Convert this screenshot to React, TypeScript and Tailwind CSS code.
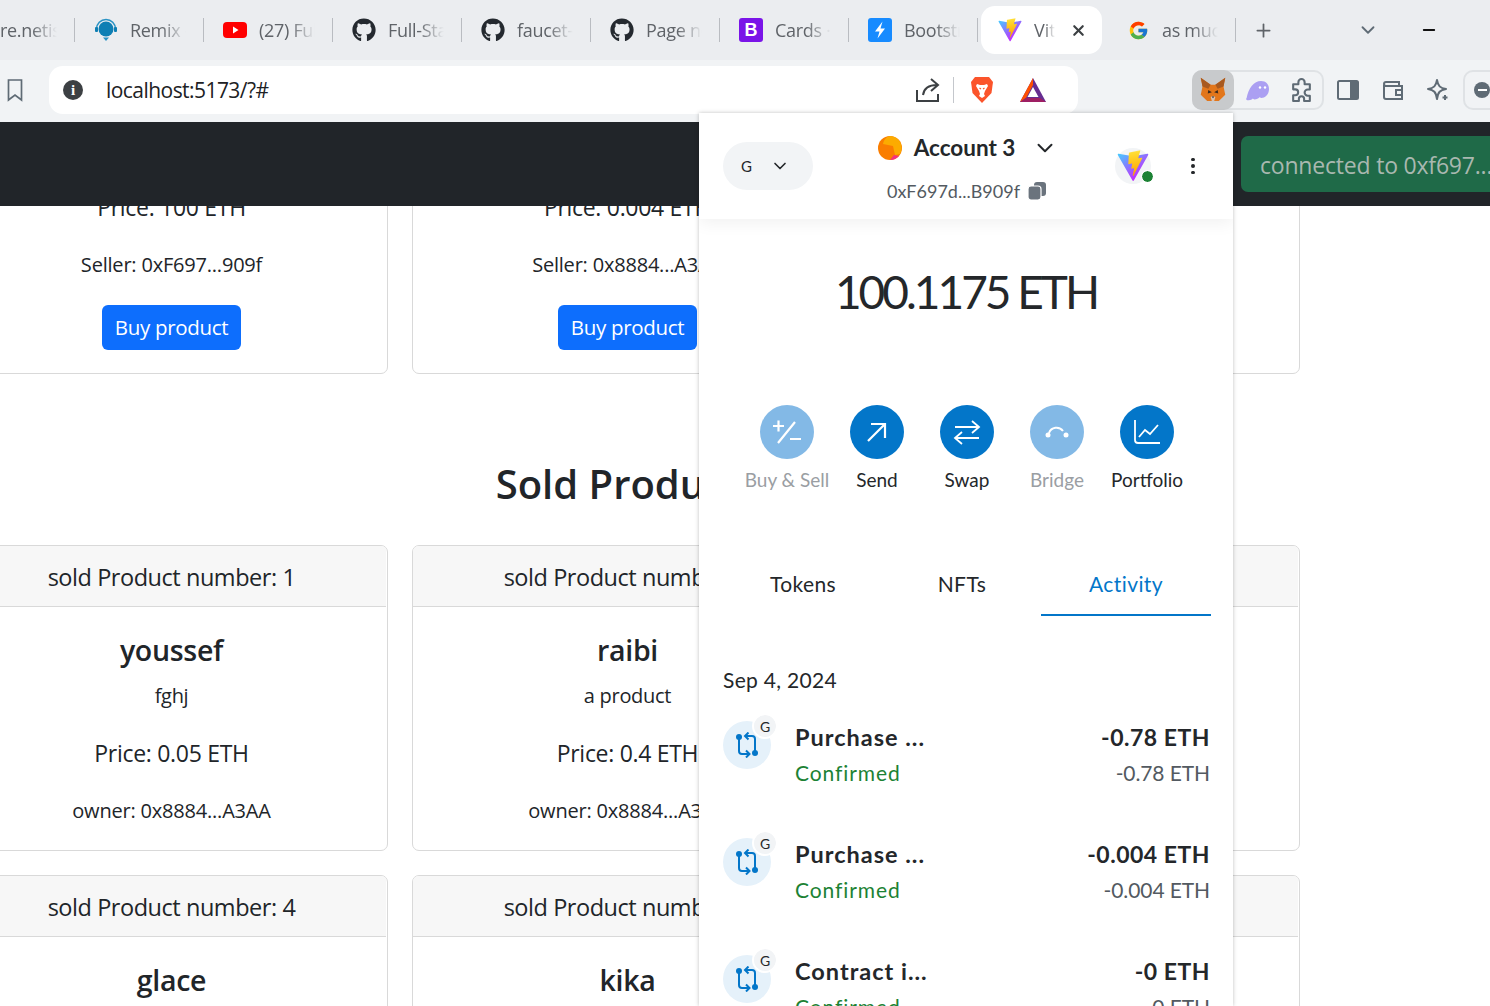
import { FaGithub } from "react-icons/fa";
import { FcGoogle } from "react-icons/fc";
import { ChevronDown, Minus, Plus, X } from "lucide-react";

const pageFont = "font-['Open_Sans',sans-serif]";
const mmFont = "font-['Lato',sans-serif]";

function ViteLogo({ id, className }: { id: string; className: string }) {
  return (
    <svg viewBox="0 0 410 404" className={className}>
      <defs>
        <linearGradient id={`${id}a`} x1="6" y1="33" x2="235" y2="344" gradientUnits="userSpaceOnUse">
          <stop stopColor="#41D1FF" />
          <stop offset="1" stopColor="#BD34FE" />
        </linearGradient>
        <linearGradient id={`${id}b`} x1="194" y1="8" x2="236" y2="292" gradientUnits="userSpaceOnUse">
          <stop stopColor="#FFEA83" />
          <stop offset="0.08" stopColor="#FFDD35" />
          <stop offset="1" stopColor="#FFA800" />
        </linearGradient>
      </defs>
      <path
        d="M399.641 59.5246L215.643 388.545C211.844 395.338 202.084 395.378 198.228 388.618L10.5817 59.5563C6.38087 52.1896 12.6802 43.2665 21.0281 44.7586L205.223 77.6824C206.398 77.8924 207.601 77.8904 208.776 77.6763L389.119 44.8058C397.439 43.2894 403.768 52.1434 399.641 59.5246Z"
        fill={`url(#${id}a)`}
      />
      <path
        d="M292.965 1.5744L156.801 28.2552C154.563 28.6937 152.906 30.5903 152.771 32.8664L144.395 174.33C144.198 177.662 147.258 180.248 150.51 179.498L188.42 170.749C191.967 169.931 195.172 173.055 194.443 176.622L183.18 231.775C182.422 235.487 185.907 238.661 189.532 237.56L212.947 230.446C216.577 229.344 220.065 232.527 219.297 236.242L201.398 322.875C200.278 328.294 207.486 331.249 210.492 326.603L212.5 323.5L323.454 102.072C325.312 98.3645 322.108 94.137 318.036 94.9228L279.014 102.454C275.347 103.161 272.227 99.746 273.262 96.1583L298.731 7.86689C299.767 4.27314 296.636 0.855181 292.965 1.5744Z"
        fill={`url(#${id}b)`}
      />
    </svg>
  );
}

function RemixIcon() {
  return (
    <svg viewBox="0 0 24 24" className="h-[24px] w-[24px]">
      <circle cx="12" cy="11" r="7.5" fill="#0e7fb4" />
      <path d="M2.5 11a9.5 9.5 0 0 1 19 0" fill="none" stroke="#2a93c4" strokeWidth="1.6" />
      <rect x="1" y="9" width="3" height="5" rx="1" fill="#0e7fb4" />
      <rect x="20" y="9" width="3" height="5" rx="1" fill="#0e7fb4" />
      <path d="M9 19.5h6l-3 3.5z" fill="#2a93c4" />
    </svg>
  );
}

function YoutubeIcon() {
  return (
    <svg viewBox="0 0 24 24" className="h-[24px] w-[24px]">
      <rect y="4" width="24" height="16" rx="4" fill="#f00" />
      <path d="M10 8.5v7l5.5-3.5z" fill="#fff" />
    </svg>
  );
}

function BootstrapIcon() {
  return (
    <div className="flex h-[24px] w-[24px] items-center justify-center rounded-[3px] bg-[#7a14e8] font-['Liberation_Sans',sans-serif] text-[18px] font-bold leading-none text-white">
      B
    </div>
  );
}

function BoltIcon() {
  return (
    <svg viewBox="0 0 24 24" className="h-[24px] w-[24px]">
      <rect width="24" height="24" rx="3" fill="#178bff" />
      <path d="M14.5 3.5 7 13.5h4.5L9.5 20.5 17 10.5h-4.5z" fill="#fff" />
    </svg>
  );
}

function Tab({ icon, label, width = "w-[129px]" }: { icon?: React.ReactNode; label: string; width?: string }) {
  return (
    <div className={`flex h-[48px] shrink-0 items-center ${width}`}>
      {icon && <div className="ml-[19px] flex w-[24px] justify-center">{icon}</div>}
      <div
        className={`${icon ? "ml-[12px] w-[56px]" : "w-[57px]"} overflow-hidden whitespace-nowrap text-[18px] tracking-[-0.3px] text-[#5f6368] [mask-image:linear-gradient(to_right,black_55%,transparent)]`}
      >
        {label}
      </div>
      <div className="ml-auto h-[24px] w-px bg-[#b9bcc1]" />
    </div>
  );
}

function TabBar() {
  return (
    <div className={`flex h-[60px] items-start bg-[#ebedf0] pt-[6px] ${pageFont}`}>
      <Tab label="re.netis" width="w-[75px]" />
      <Tab icon={<RemixIcon />} label="Remix - " />
      <Tab icon={<YoutubeIcon />} label="(27) Full" />
      <Tab icon={<FaGithub size={24} color="#24292f" />} label="Full-Stack" />
      <Tab icon={<FaGithub size={24} color="#24292f" />} label="faucet-" />
      <Tab icon={<FaGithub size={24} color="#24292f" />} label="Page not" />
      <Tab icon={<BootstrapIcon />} label="Cards · " />
      <Tab icon={<BoltIcon />} label="Bootstrap" />
      <div className="ml-[3px] flex h-[48px] w-[121px] shrink-0 items-center rounded-[14px] bg-white pl-[17px]">
        <ViteLogo id="tab" className="h-[24px] w-[24px]" />
        <span className="ml-[12px] w-[21px] overflow-hidden text-[18px] text-[#5f6368] [mask-image:linear-gradient(to_right,black_50%,transparent)]">
          Vite
        </span>
        <X size={17} strokeWidth={3} className="ml-[15px] text-[#3c4043]" />
      </div>
      <div className="ml-[26px] flex h-[48px] items-center">
        <FcGoogle size={21} />
        <span className="ml-[13px] w-[56px] overflow-hidden whitespace-nowrap text-[18px] tracking-[-0.3px] text-[#5f6368] [mask-image:linear-gradient(to_right,black_55%,transparent)]">
          as much
        </span>
        <div className="ml-[17px] h-[24px] w-px bg-[#b9bcc1]" />
        <Plus size={21} strokeWidth={2} className="ml-[17px] text-[#5f6368]" />
        <ChevronDown size={22} strokeWidth={2} className="ml-[83px] text-[#5f6b75]" />
        <Minus size={18} strokeWidth={2.4} className="ml-[41px] text-[#111]" />
      </div>
    </div>
  );
}

function FoxIcon() {
  return (
    <svg viewBox="0 0 24 24" className="h-[28px] w-[28px]">
      <path d="M1.500 1.500 10 7.500h4L22.500 1.500 21 9l1.500 7-5.500 5.500h-10L1.500 16 3 9z" fill="#e2761b" />
      <path d="M1.500 1.500 10 7.500 8 11l-5-2z" fill="#a8591f" />
      <path d="M22.500 1.500 14 7.500 16 11l5-2z" fill="#a8591f" />
      <path d="M8 12l3 2-3.500 1zM16 12l-3 2 3.500 1z" fill="#3b2a1e" />
      <path d="M10 18l2-1 2 1-1 3.500h-2z" fill="#d7c1b3" />
      <path d="M11 17.500h2l-1 1.500z" fill="#1d1a18" />
    </svg>
  );
}

function GhostIcon() {
  return (
    <svg viewBox="0 0 26 24" className="h-[24px] w-[26px]">
      <path
        d="M1.500 20.500C3.500 10 9 3 16 3c5 0 8 3.500 8 8 0 6-4.500 9-7.500 9-1.300 0-1.800-1-1.800-1s-1.700 2.500-5 2.500c-1.200 0-1.700-1-1.700-1s-2 1.800-4.500 1.800c-1.500 0-2.500-.5-2.500-1.800z"
        fill="#ab9ff2"
      />
      <circle cx="15" cy="9.500" r="1.200" fill="#fff" />
      <circle cx="20" cy="9.500" r="1.200" fill="#fff" />
    </svg>
  );
}

function BraveIcon() {
  return (
    <svg viewBox="0 0 24 28" className="h-[28px] w-[24px]">
      <path d="M5 1h14l4 5-1.500 11L12 27 2.500 17 1 6z" fill="#fb542b" />
      <path d="M7 8l3 1h4l3-1 1 2-3 5-1 3 1 2-3 2-3-2 1-2-1-3-3-5z" fill="#fff" />
      <path d="M9.500 12l1.500 1M14.500 12 13 13" stroke="#fb542b" strokeWidth="1.200" />
    </svg>
  );
}

function BatIcon() {
  return (
    <svg viewBox="0 0 28 26" className="h-[26px] w-[28px]">
      <path d="M14 1 1 25h26z" fill="#662d91" />
      <path d="M14 1 1 25l6-4 7-13z" fill="#ff5000" />
      <path d="M1 25h26l-6-4H7z" fill="#9e1f63" />
      <path d="M14 10l-5.500 10h11z" fill="#fff" />
    </svg>
  );
}

function AddressBar() {
  return (
    <div className={`flex h-[62px] items-start overflow-hidden bg-[#f1f3f5] pt-[6px] ${pageFont}`}>
      <svg viewBox="0 0 18 24" className="ml-[6px] mt-[12px] h-[24px] w-[18px] shrink-0" fill="none" stroke="#5f6b75" strokeWidth="1.700">
        <path d="M2.500 2h13v20L9 17l-6.500 5z" />
      </svg>
      <div className="ml-[25px] flex h-[48px] w-[1029px] shrink-0 items-center rounded-[14px] bg-white pr-[31px]">
        <div className="ml-[14px] flex h-[20px] w-[20px] items-center justify-center rounded-full bg-[#3c4043] font-['Liberation_Serif',serif] text-[15px] font-bold text-white">
          i
        </div>
        <span className="ml-[23px] pt-[2px] text-[21px] tracking-[-0.55px] text-[#202124]">localhost:5173/?#</span>
        <svg viewBox="0 0 26 26" className="ml-auto h-[26px] w-[26px]" fill="none" stroke="#3c4043" strokeWidth="2">
          <path d="M2 13v11h21v-7M8 18c1-7 6-10 14-10M16 2l7 6-7 6" />
        </svg>
        <div className="ml-[12px] h-[26px] w-px bg-[#c4c7cc]" />
        <div className="ml-[16px]">
          <BraveIcon />
        </div>
        <div className="ml-[25px]">
          <BatIcon />
        </div>
      </div>
      <div className="ml-[114px] mt-[4px] flex h-[40px] w-[132px] shrink-0 items-center rounded-[10px] border-2 border-[#dfe2e5]">
        <div className="-my-[2px] -ml-[2px] flex h-[40px] w-[42px] items-center justify-center rounded-[10px] bg-[#c8cacc]">
          <FoxIcon />
        </div>
        <div className="ml-[11px]">
          <GhostIcon />
        </div>
        <svg viewBox="0 0 24 24" className="ml-[18px] h-[25px] w-[25px]" fill="none" stroke="#5f6b75" strokeWidth="2" strokeLinejoin="round">
          <path d="M9 4a3 3 0 0 1 6 0v2h5v5h-2a3 3 0 0 0 0 6h2v5h-5.500v-2a2.500 2.500 0 0 0-5 0v2H4v-5.500h2a2.800 2.800 0 0 0 0-5.600H4V6h5z" />
        </svg>
      </div>
      <svg viewBox="0 0 24 24" className="ml-[12px] mt-[12px] h-[24px] w-[24px] shrink-0">
        <rect x="2" y="3" width="20" height="18" rx="1.500" fill="none" stroke="#5f6b75" strokeWidth="2" />
        <rect x="14" y="3" width="8" height="18" fill="#5f6b75" />
      </svg>
      <svg viewBox="0 0 24 24" className="ml-[21px] mt-[12px] h-[24px] w-[24px] shrink-0" fill="none" stroke="#5f6b75" strokeWidth="2">
        <path d="M3 7v12a2 2 0 0 0 2 2h16V8H5a2 2 0 0 1-2-2 2 2 0 0 1 2-2h13v4M15 12h6v5h-6z" />
      </svg>
      <svg viewBox="0 0 24 24" className="ml-[21px] mt-[12px] h-[24px] w-[24px] shrink-0" fill="none" stroke="#5f6b75" strokeWidth="2" strokeLinejoin="round">
        <path d="M11 2c1 6 3 8 9 9-6 1-8 3-9 10-1-7-3-9-9-10 6-1 8-3 9-9z" />
        <path d="M19 17v5M16.500 19.500h5" />
      </svg>
      <div className="ml-[13px] mt-[4px] flex h-[40px] w-[60px] shrink-0 items-center rounded-[10px] border-2 border-[#dfe2e5] pl-[9px]">
        <div className="flex h-[16px] w-[16px] items-center justify-center rounded-full bg-[#5f6b75]">
          <div className="h-[2px] w-[9px] bg-white" />
        </div>
      </div>
    </div>
  );
}

type Sold = { number: number; name?: string; desc?: string; price?: string; owner?: string };

function SoldCard({ number, name, desc, price, owner }: Sold) {
  return (
    <div className="h-[306px] overflow-hidden rounded-[7px] border border-[#d9d9d9] bg-white pr-[1px] text-center text-[#212529]">
      <div className="flex h-[61px] items-center justify-center border-b border-[#d9d9d9] bg-[#f7f7f7] pt-[4px] text-[23.500px] tracking-[-0.45px]">
        sold Product number: {number}
      </div>
      <div className="pt-[23px]">
        <div className="h-[40px] text-[28.500px] font-semibold leading-[40px] tracking-[-0.3px]">{name}</div>
        <div className="mt-[11px] h-[30px] text-[20px] leading-[30px] tracking-[-0.3px]">{desc}</div>
        <div className="mt-[25px] h-[34px] text-[23px] leading-[34px] tracking-[-0.3px]">{price}</div>
        <div className="mt-[26px] h-[30px] text-[20px] leading-[30px] tracking-[-0.2px]">{owner}</div>
      </div>
    </div>
  );
}

function OnSaleCard({ price, seller }: { price?: string; seller?: string }) {
  return (
    <div className="-mt-[32px] flex h-[200px] flex-col items-center rounded-[7px] border border-[#d9d9d9] bg-white pr-[1px] text-[#212529]">
      <div className="h-[34px] pt-[15px] text-[23px] leading-[34px] tracking-[-0.3px]">{price}</div>
      <div className="mt-[41px] text-[20px] leading-[30px] tracking-[-0.2px]">{seller}</div>
      {seller && (
        <button className="mt-[25px] flex h-[45px] w-[139px] items-center justify-center rounded-[6px] bg-[#0d6efd] text-[20.500px] tracking-[-0.3px] text-white">
          Buy product
        </button>
      )}
    </div>
  );
}

function PageBody() {
  return (
    <div className={`h-[800px] overflow-hidden bg-white ${pageFont}`}>
      <div className="ml-[-44px] w-[1344px]">
        <div className="grid grid-cols-3 gap-x-[24px]">
          <OnSaleCard price="Price: 100 ETH" seller="Seller: 0xF697...909f" />
          <OnSaleCard price="Price: 0.004 ETH" seller="Seller: 0x8884...A3AA" />
          <OnSaleCard />
        </div>
        <h2 className="mb-[35px] mt-[84px] text-center text-[40px] font-semibold leading-[52px] text-[#212529]">
          Sold Products
        </h2>
        <div className="grid grid-cols-3 gap-x-[24px] gap-y-[24px]">
          <SoldCard number={1} name="youssef" desc="fghj" price="Price: 0.05 ETH" owner="owner: 0x8884...A3AA" />
          <SoldCard number={2} name="raibi" desc="a product" price="Price: 0.4 ETH" owner="owner: 0x8884...A3AA" />
          <SoldCard number={3} />
          <SoldCard number={4} name="glace" />
          <SoldCard number={5} name="kika" />
          <SoldCard number={6} />
        </div>
      </div>
    </div>
  );
}

function ActionButton({ label, dim, icon }: { label: string; dim?: boolean; icon: React.ReactNode }) {
  return (
    <div className="flex w-[90px] flex-col items-center">
      <div className={`flex h-[54px] w-[54px] items-center justify-center rounded-full ${dim ? "bg-[#83b9e6]" : "bg-[#0376c9]"}`}>
        {icon}
      </div>
      <div className={`mt-[7px] whitespace-nowrap text-[19px] leading-[28px] ${dim ? "text-[#9a9ea3]" : "text-[#24272a]"}`}>{label}</div>
    </div>
  );
}

function ActivityRow({ title, main, sub }: { title: string; main: string; sub: string }) {
  return (
    <div className="flex h-[117px] shrink-0 items-start">
      <div className="relative mt-[1px] h-[48px] w-[48px] shrink-0 rounded-full bg-[#e5f1fa]">
        <svg viewBox="0 0 24 26" className="absolute left-[12px] top-[11px] h-[26px] w-[24px]" fill="none" stroke="#0376c9" strokeWidth="2">
          <circle cx="4" cy="5" r="3" fill="#0376c9" stroke="none" />
          <circle cx="20" cy="21" r="3" fill="#0376c9" stroke="none" />
          <path d="M4 7v12a3 3 0 0 0 3 3h7M11 18.500l3.500 3.500-3.500 3.500M20 19V7a3 3 0 0 0-3-3h-7M13.500.500 10 4l3.500 3.500" />
        </svg>
        <div className="absolute -right-[5px] -top-[6px] flex h-[22px] w-[22px] items-center justify-center rounded-full bg-[#f2f4f6] text-[14px] text-[#24272a] outline-2 outline-white">
          G
        </div>
      </div>
      <div className="ml-[24px] mt-[2px]">
        <div className="text-[23.500px] font-bold leading-[30px] tracking-[1px] text-[#24272a]">{title}</div>
        <div className="mt-[6px] text-[21px] leading-[30px] tracking-[0.9px] text-[#1c8234]">Confirmed</div>
      </div>
      <div className="ml-auto mr-[1px] mt-[2px] text-right">
        <div className="text-[23px] font-bold leading-[30px] tracking-[0.5px] text-[#24272a]">{main}</div>
        <div className="mt-[6px] text-[21px] leading-[30px] tracking-[-0.1px] text-[#535a61]">{sub}</div>
      </div>
    </div>
  );
}

function MetaMaskPopup() {
  return (
    <div className={`absolute bottom-0 left-[699px] top-[113px] flex w-[534px] flex-col overflow-hidden bg-white shadow-[0_0_4px_rgba(0,0,0,0.25)] ${mmFont}`}>
      <div className="flex h-[106px] shrink-0 items-center shadow-[0_4px_16px_rgba(0,0,0,0.06)]">
        <div className="ml-[24px] flex h-[48px] w-[90px] items-center rounded-full bg-[#f2f4f6] pl-[18px] text-[15px] text-[#24272a]">
          G
          <ChevronDown size={20} strokeWidth={2} className="ml-[18px]" />
        </div>
        <div className="ml-[64px] flex w-[180px] flex-col items-center pt-[5px]">
          <div className="flex items-center whitespace-nowrap pl-[2px]">
            <svg viewBox="0 0 24 24" className="h-[24px] w-[24px] shrink-0">
              <circle cx="12" cy="12" r="12" fill="#fa7d00" />
              <path d="M13 0a12 12 0 0 1 9 18l-5 1-2-9-10-2C6 3 9 0 13 0z" fill="#fcab00" />
              <path d="M12 24a12 12 0 0 0 9-4l-5-1z" fill="#f5327e" />
            </svg>
            <span className="ml-[12px] text-[22.500px] font-bold leading-[30px] text-[#24272a]">Account 3</span>
            <ChevronDown size={26} strokeWidth={1.800} className="ml-[17px] text-[#24272a]" />
          </div>
          <div className="mt-[15px] flex items-center whitespace-nowrap text-[18px] leading-[26px] text-[#535a61]">
            0xF697d...B909f
            <svg viewBox="0 0 20 20" className="ml-[7px] h-[20px] w-[20px]" fill="#6a737d">
              <rect x="7" y="1" width="12" height="14" rx="3" />
              <rect x="1" y="5" width="13" height="14" rx="3" stroke="#fff" strokeWidth="1.200" />
            </svg>
          </div>
        </div>
        <div className="relative ml-[58px] flex h-[36px] w-[36px] items-center justify-center rounded-full bg-[#f2f4f6]">
          <ViteLogo id="mm" className="h-[32px] w-[32px] shrink-0" />
          <div className="absolute -right-[2px] bottom-[2.500px] h-[11px] w-[11px] rounded-full bg-[#1c8234] outline outline-white" />
        </div>
        <div className="ml-[40px] flex flex-col gap-[3px]">
          <div className="h-[3.500px] w-[3.500px] rounded-full bg-[#24272a]" />
          <div className="h-[3.500px] w-[3.500px] rounded-full bg-[#24272a]" />
          <div className="h-[3.500px] w-[3.500px] rounded-full bg-[#24272a]" />
        </div>
      </div>

      <div className="mt-[40px] text-center text-[46px] font-normal leading-[66px] tracking-[-3px] text-[#24272a]">100.1175 ETH</div>

      <div className="mt-[80px] flex justify-center pl-[2px]">
        <ActionButton
          label="Buy & Sell"
          dim
          icon={
            <svg viewBox="0 0 32 32" className="h-[32px] w-[32px]" fill="none" stroke="#fff" strokeWidth="2.200">
              <path d="M2 10h11M7.500 4.500v11M7 27 24 6M19 23h11" />
            </svg>
          }
        />
        <ActionButton
          label="Send"
          icon={
            <svg viewBox="0 0 24 24" className="h-[24px] w-[24px]" fill="none" stroke="#fff" strokeWidth="2.200">
              <path d="M3 21 20 4M6 4h14v14" />
            </svg>
          }
        />
        <ActionButton
          label="Swap"
          icon={
            <svg viewBox="0 0 28 28" className="h-[28px] w-[28px]" fill="none" stroke="#fff" strokeWidth="1.800">
              <path d="M2 9h24M19 3l7 6-7 6M26 20H2M9 14l-7 6 7 6" />
            </svg>
          }
        />
        <ActionButton
          label="Bridge"
          dim
          icon={
            <svg viewBox="0 0 26 14" className="h-[14px] w-[26px]" fill="none" stroke="#fff" strokeWidth="2">
              <path d="M5 8a8 8 0 0 1 14-2" />
              <circle cx="4" cy="10" r="2.500" fill="#fff" stroke="none" />
              <circle cx="22" cy="10" r="2.500" fill="#fff" stroke="none" />
            </svg>
          }
        />
        <ActionButton
          label="Portfolio"
          icon={
            <svg viewBox="0 0 28 28" className="h-[28px] w-[28px]" fill="none" stroke="#fff" strokeWidth="1.800">
              <path d="M2 2v20a3 3 0 0 0 3 3h22M6 19l6-7 5 4 8-9" />
            </svg>
          }
        />
      </div>

      <div className="ml-[24px] mr-[22px] mt-[59px] grid h-[63px] shrink-0 grid-cols-[160px_158px_170px] text-center text-[21px] tracking-[0.4px]">
        <div className="flex items-center justify-center pb-[2px] text-[#24272a]">Tokens</div>
        <div className="flex items-center justify-center pb-[2px] text-[#24272a]">NFTs</div>
        <div className="flex items-center justify-center border-b-2 border-[#0376c9] text-[#0376c9]">Activity</div>
      </div>

      <div className="ml-[24px] mr-[22px] mt-[49px] flex flex-col">
        <div className="text-[21px] leading-[30px] tracking-[0.3px] text-[#24272a]">Sep 4, 2024</div>
        <div className="mt-[25px] flex flex-col">
          <ActivityRow title="Purchase ..." main="-0.78 ETH" sub="-0.78 ETH" />
          <ActivityRow title="Purchase ..." main="-0.004 ETH" sub="-0.004 ETH" />
          <ActivityRow title="Contract i..." main="-0 ETH" sub="-0 ETH" />
        </div>
      </div>
    </div>
  );
}

export default function App() {
  return (
    <div className="relative h-[1006px] w-[1490px] overflow-hidden bg-white">
      <TabBar />
      <AddressBar />
      <div className="h-[84px] bg-[#212529]" />
      <PageBody />
      <MetaMaskPopup />
      {/* toast sits over the navbar, runs past the window edge */}
      <div className={`absolute left-[1241px] top-[136px] flex h-[56px] w-[300px] items-center rounded-[7px] bg-[#1f6a48] pl-[19px] pt-[2px] text-[23px] tracking-[-0.2px] text-[#a9b8b0] ${pageFont}`}>
        <span className="whitespace-nowrap">connected to 0xf697...</span>
      </div>
    </div>
  );
}
